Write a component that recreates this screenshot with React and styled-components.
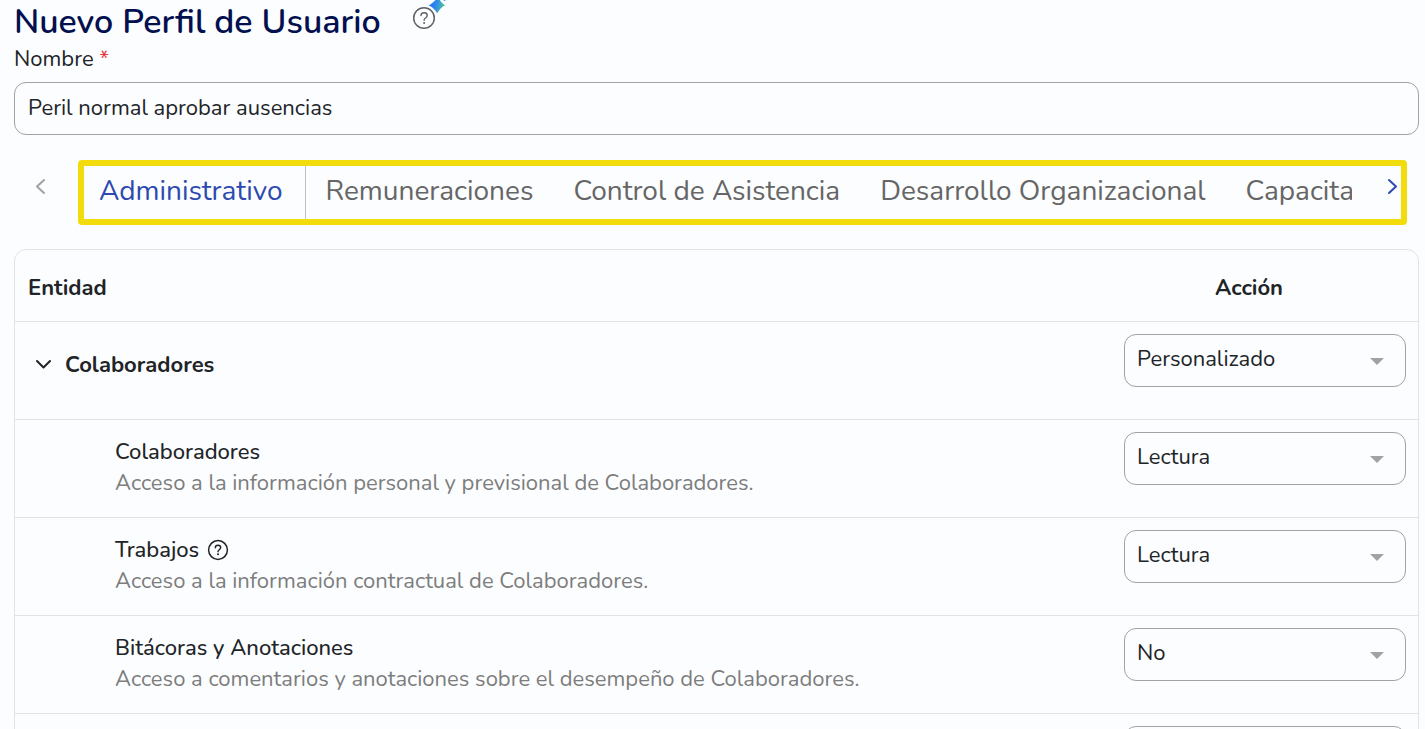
import React, { useState } from 'react';
import styled, { createGlobalStyle } from 'styled-components';

// styles
const colors = {
  background: '#fcfdff',
  title: '#03104f',
  text: '#212427',
  muted: '#7d7d7d',
  tab: '#666666',
  primary: '#2d4ab0',
  border: '#a0a2a5',
  line: '#e0e2e5',
  highlight: '#f2dc0c',
  required: '#e5393c',
};

const GlobalStyle = createGlobalStyle`
  * {
    box-sizing: border-box;
  }

  body {
    margin: 0;
    background: ${colors.background};
    color: ${colors.text};
    font-family: Nunito, Lato, sans-serif;
    font-size: 22px;
    line-height: 30px;
  }

  button,
  input,
  select {
    font: inherit;
    color: inherit;
  }
`;

const Page = styled.main`
  height: 100vh;
  overflow: hidden;
  padding: 0 6px 0 14px;
`;

const TitleBar = styled.header`
  display: flex;
  align-items: flex-start;
  gap: 31px;
  height: 44px;
`;

const Title = styled.h1`
  margin: 0;
  font-size: 34px;
  line-height: 44px;
  font-weight: 600;
  color: ${colors.title};
`;

const IconButton = styled.button`
  display: inline-flex;
  padding: 0;
  border: 0;
  background: none;
  color: ${(props) => props.$color};
  cursor: pointer;
`;

const Label = styled.label`
  display: block;
  margin-bottom: 8px;
`;

const Required = styled.span`
  color: ${colors.required};
`;

const TextInput = styled.input`
  display: block;
  width: 100%;
  height: 53px;
  padding: 0 13px 2px;
  border: 1px solid ${colors.border};
  border-radius: 12px;
  background: transparent;
`;

const TabBar = styled.nav`
  display: flex;
  margin: 25px 12px 24px 0;
`;

const ArrowButton = styled(IconButton)`
  flex: none;
  align-items: center;
  justify-content: ${(props) => props.$align};
  width: ${(props) => props.$width};
  padding: 0 0 12px;
`;

const TabFrame = styled.div`
  display: flex;
  flex: 1;
  min-width: 0;
  height: 65px;
  border: 6px solid ${colors.highlight};
  border-radius: 4px;
`;

const TabList = styled.div`
  display: flex;
  flex: 1;
  overflow: hidden;
`;

const Tab = styled.button`
  flex: none;
  padding: 0 20px 4px;
  border: 0;
  background: none;
  font-size: 28px;
  line-height: 40px;
  color: ${(props) => (props.$active ? colors.primary : colors.tab)};
  cursor: pointer;

  &:first-child {
    padding-right: 22px;
    padding-left: 15px;
  }

  ${(props) => props.$active && 'border-right: 1px solid #bfc0c2;'}
`;

const TableEl = styled.table`
  width: 100%;
  table-layout: fixed;
  border: 1px solid ${colors.line};
  border-radius: 12px;
  border-spacing: 0;

  th,
  td {
    padding: 12px 13px;
    text-align: left;
    vertical-align: top;
  }

  thead th {
    height: 72px;
    padding-top: 23px;
    border-bottom: 1px solid ${colors.line};
    font-weight: 700;
  }

  thead th:last-child {
    width: 338px;
    text-align: center;
  }

  tbody tr > * {
    height: 98px;
    border-bottom: 1px solid ${colors.line};
  }

  tbody td {
    padding: 12px 12px 12px 44px;
  }
`;

const GroupName = styled.div`
  display: flex;
  align-items: center;
  gap: 13px;
  padding: 16px 0 0 7px;
  font-weight: 700;
`;

const Entity = styled.div`
  padding: 5px 0 0 87px;
  font-weight: 400;
`;

const EntityName = styled.div`
  display: flex;
  align-items: center;
  gap: 8px;
  font-weight: 500;
`;

const EntityDescription = styled.p`
  margin: 1px 0 0;
  color: ${colors.muted};
`;

const SelectWrap = styled.div`
  position: relative;

  svg {
    position: absolute;
    top: 24px;
    right: 22px;
    pointer-events: none;
  }
`;

const SelectEl = styled.select`
  display: block;
  appearance: none;
  width: 100%;
  height: 53px;
  padding: 0 40px 4px 12px;
  border: 1px solid ${colors.border};
  border-radius: 12px;
  background: transparent;
`;

// icons
const HelpIcon = () => (
  <svg width="22" height="22" viewBox="0 0 22 22" fill="none" stroke="currentColor">
    <circle cx="11" cy="11" r="9.4" strokeWidth="1.5" />
    <path
      d="M8.3 8.7c0-1.5 1.1-2.5 2.7-2.5s2.7 1 2.7 2.3c0 1.1-.7 1.7-1.5 2.3-.8.6-1.2 1-1.2 1.9"
      strokeWidth="1.4"
      strokeLinecap="round"
    />
    <circle cx="11" cy="15.3" r="1" fill="currentColor" stroke="none" />
  </svg>
);

const AssistantIcon = () => (
  <svg width="34" height="30" viewBox="0 0 34 30" fill="none">
    <defs>
      <linearGradient id="spark" x1="16" y1="4" x2="32" y2="8" gradientUnits="userSpaceOnUse">
        <stop offset="0" stopColor="#1b6dff" />
        <stop offset="0.45" stopColor="#2f86ee" />
        <stop offset="1" stopColor="#4fc49a" />
      </linearGradient>
    </defs>
    <circle cx="12" cy="18" r="10.3" stroke="#606266" strokeWidth="1.5" />
    <path
      d="M9 15.6c0-1.7 1.3-2.9 3.1-2.9s3.1 1.1 3.1 2.7c0 1.3-.8 1.9-1.7 2.6-.9.6-1.4 1.1-1.4 2.2"
      stroke="#606266"
      strokeWidth="1.4"
      strokeLinecap="round"
    />
    <circle cx="12.1" cy="23" r="1" fill="#606266" />
    <path
      d="M26.5-4C27.500 0 29 3 33 5.200 29.500 7 27.500 9.500 25.200 13.200 23 9.800 20.500 7 16.800 5.500 20.500 3 23.500 1 26.500-4z"
      fill="url(#spark)"
    />
    <circle cx="32.5" cy="0" r="1" fill="#3f9ee8" />
  </svg>
);

const Chevron = ({ d, width, height }) => (
  <svg width={width} height={height} viewBox={`0 0 ${width} ${height}`} fill="none">
    <path d={d} stroke="currentColor" strokeWidth="2" strokeLinecap="round" strokeLinejoin="round" />
  </svg>
);

const actions = ['No', 'Lectura', 'Personalizado'];

const tabs = [
  'Administrativo',
  'Remuneraciones',
  'Control de Asistencia',
  'Desarrollo Organizacional',
  'Capacitación',
];

const entities = [
  {
    name: 'Colaboradores',
    description: 'Acceso a la información personal y previsional de Colaboradores.',
    action: 'Lectura',
  },
  {
    name: 'Trabajos',
    description: 'Acceso a la información contractual de Colaboradores.',
    action: 'Lectura',
    help: true,
  },
  {
    name: 'Bitácoras y Anotaciones',
    description: 'Acceso a comentarios y anotaciones sobre el desempeño de Colaboradores.',
    action: 'No',
  },
  { name: '', description: '', action: 'No' },
];

const ActionSelect = ({ label, value }) => (
  <SelectWrap>
    <SelectEl aria-label={label} defaultValue={value}>
      {actions.map((action) => (
        <option key={action}>{action}</option>
      ))}
    </SelectEl>
    <svg width="14" height="7" viewBox="0 0 14 7">
      <path d="M0 0h14L7 7z" fill="#a0a2a5" />
    </svg>
  </SelectWrap>
);

const App = () => {
  const [activeTab, setActiveTab] = useState(tabs[0]);

  return (
    <>
      <GlobalStyle />
      <Page>
        <TitleBar>
          <Title>Nuevo Perfil de Usuario</Title>
          <IconButton type="button" aria-label="Ayuda">
            <AssistantIcon />
          </IconButton>
        </TitleBar>
        <Label htmlFor="nombre">
          Nombre <Required>*</Required>
        </Label>
        <TextInput id="nombre" type="text" defaultValue="Peril normal aprobar ausencias" />
        <TabBar>
          <ArrowButton type="button" aria-label="Anterior" $color="#a0a2a5" $align="flex-start" $width="64px">
            <Chevron d="M30 2l-7 6.5 7 6.5" width={32} height={17} />
          </ArrowButton>
          <TabFrame>
            <TabList role="tablist">
              {tabs.map((tab) => (
                <Tab
                  key={tab}
                  type="button"
                  role="tab"
                  aria-selected={tab === activeTab}
                  $active={tab === activeTab}
                  onClick={() => setActiveTab(tab)}
                >
                  {tab}
                </Tab>
              ))}
            </TabList>
            <ArrowButton type="button" aria-label="Siguiente" $color={colors.primary} $align="flex-end" $width="49px">
              <Chevron d="M2 2l7 6.5-7 6.5" width={14} height={17} />
            </ArrowButton>
          </TabFrame>
        </TabBar>
        <TableEl>
          <thead>
            <tr>
              <th scope="col">Entidad</th>
              <th scope="col">Acción</th>
            </tr>
          </thead>
          <tbody>
            <tr>
              <th scope="row">
                <GroupName>
                  <IconButton type="button" aria-label="Contraer" $color={colors.text}>
                    <Chevron d="M2 2l6.5 6.5L15 2" width={17} height={12} />
                  </IconButton>
                  Colaboradores
                </GroupName>
              </th>
              <td>
                <ActionSelect label="Acción para el grupo" value="Personalizado" />
              </td>
            </tr>
            {entities.map((entity) => (
              <tr key={entity.name}>
                <th scope="row">
                  <Entity>
                    <EntityName>
                      {entity.name}
                      {entity.help && (
                        <IconButton type="button" aria-label="Ayuda" $color={colors.text}>
                          <HelpIcon />
                        </IconButton>
                      )}
                    </EntityName>
                    <EntityDescription>{entity.description}</EntityDescription>
                  </Entity>
                </th>
                <td>
                  <ActionSelect label={`Acción ${entity.name}`} value={entity.action} />
                </td>
              </tr>
            ))}
          </tbody>
        </TableEl>
      </Page>
    </>
  );
};

export default App;
